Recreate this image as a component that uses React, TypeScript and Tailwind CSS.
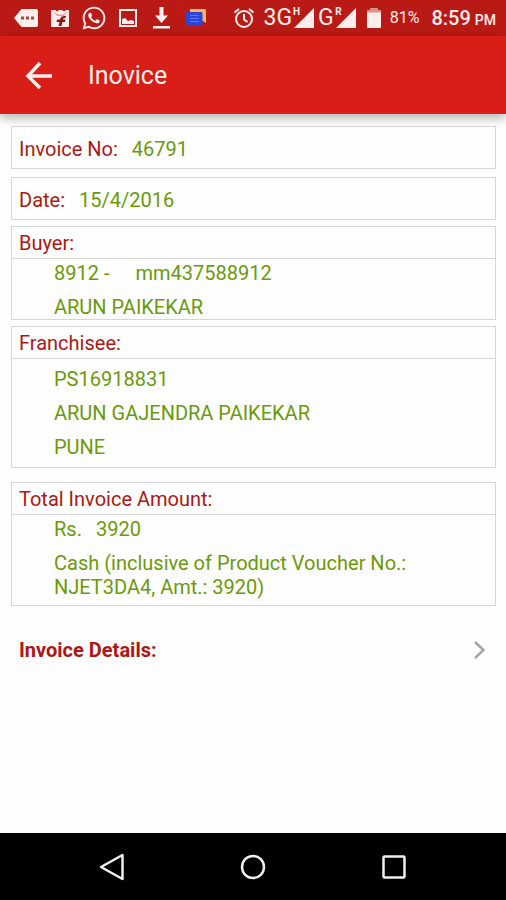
import type { ReactNode } from 'react'
import { FaWhatsapp } from 'react-icons/fa'

interface SectionProps {
  title: string
  className?: string
  children: ReactNode
}

function StatusBar() {
  return (
    <div className="flex h-9 items-center justify-between bg-[#b91a15] pl-3.5 pr-2.5 text-[#ffeeec]">
      <div className="flex items-center gap-3">
        <svg className="h-5 w-6" viewBox="0 0 24 20" fill="currentColor">
          <path d="M7.5 1H22a2 2 0 0 1 2 2v14a2 2 0 0 1-2 2H7.5L0 10z" />
          <path d="M7 8.500h3v3H7zM12 8.500h3v3h-3zM17 8.500h3v3h-3z" fill="#a8463f" />
        </svg>
        <svg className="h-5 w-5" viewBox="0 0 20 20">
          <path d="M1 2h4l2 1.500L9 2h3l2 1.500L16 2h3v16a1 1 0 0 1-1 1H2a1 1 0 0 1-1-1z" fill="currentColor" />
          <path d="M3 3l4 5h7l4-5-5 3.500H8z" fill="#e0a096" />
          <path d="M8.500 18l1-4H6.500l.6-2.500h3c.6-3 2.300-4 5.900-3.500l-.5 2c-1.700 0-2.300.3-2.600 1.500h2.600l-.6 2.500h-2.500l-1 4z" fill="#8f1711" />
        </svg>
        <FaWhatsapp className="h-[26px] w-6" />
        <svg className="h-5 w-5" viewBox="0 0 20 20">
          <rect x="2" y="2" width="16" height="16" fill="none" stroke="currentColor" strokeWidth="2" />
          <path d="M4 16v-5l3-1 3 3 3-1 3 1v3z" fill="currentColor" />
        </svg>
        <svg className="h-6 w-6" viewBox="0 0 24 24" fill="currentColor">
          <path d="M9.500 1h4v8.500H18L11.500 17 5 9.500h4.500zM3 20h17v2.500H3z" />
        </svg>
        <svg className="h-5 w-5" viewBox="0 0 20 20">
          <path d="M4 1h14.500A1.500 1.500 0 0 1 20 2.500V15l-3-2H4z" fill="#f2b669" />
          <path d="M1.500 4H15a1.500 1.500 0 0 1 1.500 1.500v10A1.500 1.500 0 0 1 15 17H5l-3 1.500V17L0 15.500v-10A1.500 1.500 0 0 1 1.500 4z" fill="#2a45dc" />
          <path d="M4 7.500h9M4 10.500h9M4 13.500h9" stroke="#6378ea" strokeWidth="1.200" />
        </svg>
      </div>

      <div className="flex items-center">
        <svg className="mr-2 h-[22px] w-[22px]" viewBox="0 0 22 22" fill="none" stroke="currentColor" strokeWidth="2">
          <circle cx="11" cy="12" r="8" />
          <path d="M11 7v5.500l3.500 2.500M1.500 5.500L6 2M20.500 5.500L16 2" />
        </svg>
        <div className="mr-2.5 flex items-center gap-1">
          <Network label="3G" mode="H" />
          <Network label="G" mode="R" />
        </div>
        <svg className="mr-2 h-5 w-4" viewBox="0 0 16 20">
          <path d="M4 0h8v2h3v3H1V2h3z" fill="#dd8f88" />
          <path d="M1 4.500h14V19a1 1 0 0 1-1 1H2a1 1 0 0 1-1-1z" fill="currentColor" />
        </svg>
        <span className="mr-3 text-base">81%</span>
        <span className="flex items-baseline gap-1 text-xl font-medium">
          8:59 <span className="text-sm">PM</span>
        </span>
      </div>
    </div>
  )
}

function Network({ label, mode }: { label: string; mode: string }) {
  return (
    <div className="relative flex items-center gap-0.5">
      <span className="text-[23px] leading-7">{label}</span>
      <svg className="h-5 w-5" viewBox="0 0 20 20" fill="currentColor">
        <path d="M20 0v20H0z" />
      </svg>
      <span className="absolute right-3.5 top-0.5 text-[10px] font-bold leading-3">{mode}</span>
    </div>
  )
}

function AppBar() {
  return (
    <header className="flex h-[78px] items-center gap-9 bg-[#d81e17] pl-6 text-[#ffeeec] shadow-[0_4px_10px_rgba(0,0,0,0.3)]">
      <button type="button" aria-label="Back">
        <svg className="h-7 w-7" viewBox="0 0 28 28" fill="none" stroke="currentColor" strokeWidth="3.500">
          <path d="M16 2L4 15l12 12M4 15h25" />
        </svg>
      </button>
      <h1 className="pt-0.5 text-[25px] leading-8">Inovice</h1>
    </header>
  )
}

function Field({ label, value }: { label: string; value: string }) {
  return (
    <div className="flex h-[43px] items-center gap-3.5 border border-[#d6d6d8] px-[7px] pt-0.5">
      <dt className="text-[#ae1712]">{label}</dt>
      <dd>{value}</dd>
    </div>
  )
}

function Section({ title, className, children }: SectionProps) {
  return (
    <section className={`border border-[#d6d6d8] ${className ?? ''}`}>
      <h2 className="border-b border-[#d6d6d8] px-[7px] pb-[3px] pt-1 text-[#ae1712]">{title}</h2>
      {children}
    </section>
  )
}

function NavBar() {
  return (
    <nav className="flex h-[67px] items-center justify-around bg-black px-[42px] text-[#eeeeee]">
      <button type="button" aria-label="Back">
        <svg className="h-7 w-7" viewBox="0 0 28 28" fill="none" stroke="currentColor" strokeWidth="2.500" strokeLinejoin="round">
          <path d="M24.500 2v24L3 14z" />
        </svg>
      </button>
      <button type="button" aria-label="Home">
        <svg className="h-7 w-7" viewBox="0 0 28 28" fill="none" stroke="currentColor" strokeWidth="2.500">
          <circle cx="14" cy="14" r="11" />
        </svg>
      </button>
      <button type="button" aria-label="Recent apps">
        <svg className="h-7 w-7" viewBox="0 0 28 28" fill="none" stroke="currentColor" strokeWidth="2.500">
          <rect x="3.500" y="3.500" width="21" height="21" rx="1" />
        </svg>
      </button>
    </nav>
  )
}

export default function App() {
  return (
    <div className="flex min-h-screen flex-col bg-[#fefefe] font-['Roboto',sans-serif]">
      <StatusBar />
      <AppBar />

      <main className="flex-1 pl-[11px] pr-2.5 pt-3 text-xl leading-6 text-[#6a9a0a]">
        <dl className="space-y-2">
          <Field label="Invoice No:" value="46791" />
          <Field label="Date:" value="15/4/2016" />
        </dl>

        <Section title="Buyer:" className="mt-1.5">
          <div className="space-y-2.5 px-[42px] pt-0.5">
            <p className="flex gap-[26px]">
              <span>8912 -</span>
              <span>mm437588912</span>
            </p>
            <p>ARUN PAIKEKAR</p>
          </div>
        </Section>

        <Section title="Franchisee:" className="mt-1.5">
          <div className="space-y-2.5 px-[42px] py-2">
            <p>PS16918831</p>
            <p>ARUN GAJENDRA PAIKEKAR</p>
            <p>PUNE</p>
          </div>
        </Section>

        <Section title="Total Invoice Amount:" className="mt-3.5">
          <div className="space-y-2.5 px-[42px] pb-1.5 pt-0.5">
            <p className="flex gap-3.5">
              <span>Rs.</span>
              <span>3920</span>
            </p>
            <p>Cash (inclusive of Product Voucher No.: NJET3DA4, Amt.: 3920)</p>
          </div>
        </Section>

        <button type="button" className="mt-6 flex h-10 w-full items-center justify-between px-2 font-bold text-[#ae1712]">
          Invoice Details:
          <svg className="h-5 w-4" viewBox="0 0 16 20" fill="none" stroke="#a5a5a5" strokeWidth="2.500">
            <path d="M3 2l8.500 8L3 18" />
          </svg>
        </button>
      </main>

      <NavBar />
    </div>
  )
}
